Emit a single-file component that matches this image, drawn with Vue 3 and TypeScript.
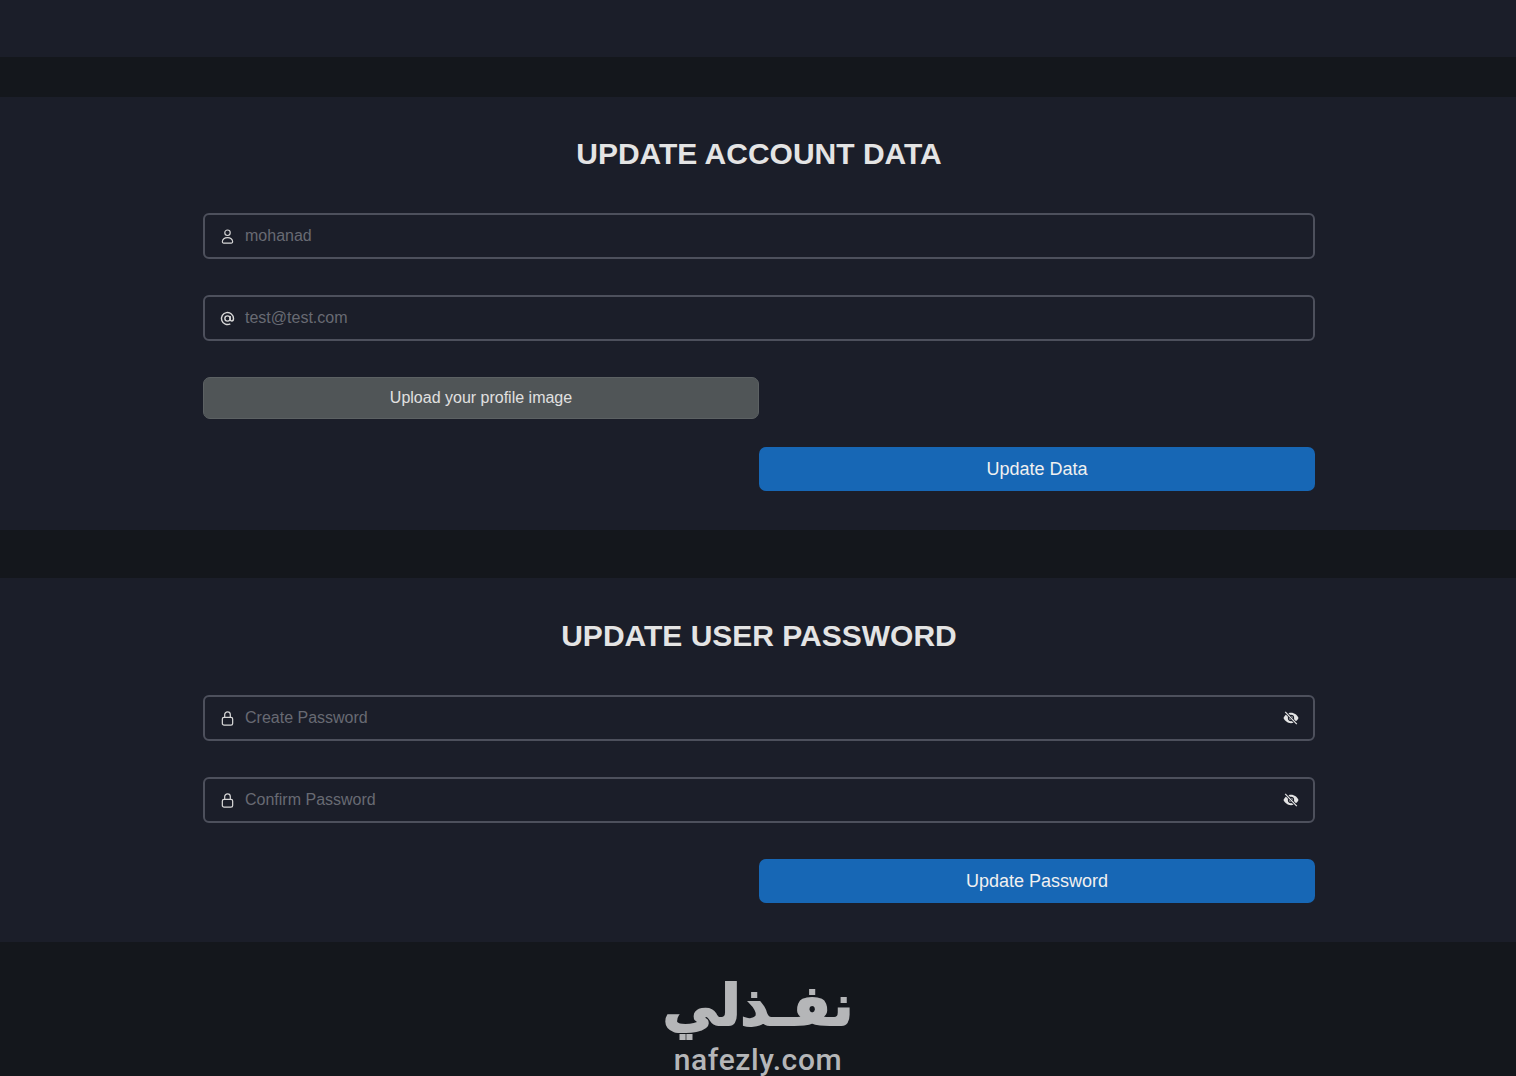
<script setup lang="ts">
const accountFields = [
  { icon: 'user', value: 'mohanad' },
  { icon: 'at', value: 'test@test.com' },
]
const passwordFields = ['Create Password', 'Confirm Password']
</script>

<template>
  <div class="page">
    <div class="topbar"></div>

    <section class="panel account">
      <h2>UPDATE ACCOUNT DATA</h2>
      <div class="form">
        <div v-for="f in accountFields" :key="f.value" class="field">
          <svg v-if="f.icon === 'user'" class="icon" viewBox="0 0 16 16" fill="none" stroke="currentColor" stroke-width="1.2">
            <circle cx="8" cy="4" r="2.900" />
            <path d="M4 15c-1 0-1.600-.6-1.500-1.500.3-2.600 2.600-4.300 5.500-4.300s5.200 1.700 5.500 4.300c.1.900-.5 1.500-1.500 1.500z" />
          </svg>
          <svg v-else class="icon" viewBox="0 0 16 16" fill="none" stroke="currentColor" stroke-width="1.500">
            <circle cx="8" cy="8" r="2.800" />
            <path d="M10.800 5.200v3.700c0 1.100.8 1.800 1.700 1.800s1.900-.8 1.900-2.700A6.400 6.400 0 1 0 11 13.700" />
          </svg>
          <span class="value">{{ f.value }}</span>
        </div>
        <div class="upload">Upload your profile image</div>
        <div class="btn-row after-upload">
          <button class="btn">Update Data</button>
        </div>
      </div>
    </section>

    <section class="panel password">
      <h2>UPDATE USER PASSWORD</h2>
      <div class="form">
        <div v-for="p in passwordFields" :key="p" class="field">
          <svg class="icon" viewBox="0 0 16 16" fill="none" stroke="currentColor" stroke-width="1.300">
            <rect x="2.500" y="6.800" width="11" height="8.200" rx="1.800" />
            <path d="M5 6.800V4a3 3 0 0 1 6 0v2.800" />
          </svg>
          <span class="value">{{ p }}</span>
          <svg class="eye" viewBox="0 0 16 16">
            <path fill="currentColor" d="M8 2.800c3.500 0 6.300 2.500 7.500 5.200-1.200 2.700-4 5.200-7.500 5.200S1.700 10.700.5 8C1.700 5.300 4.500 2.800 8 2.800z" />
            <circle cx="8" cy="8" r="2.600" fill="none" stroke="#1b1e29" stroke-width="1.100" />
            <path d="M2.200 1.800l11.600 12.400" stroke="#1b1e29" stroke-width="2.800" />
            <path d="M2.200 1.800l11.600 12.400" stroke="currentColor" stroke-width="1.200" />
          </svg>
        </div>
        <div class="btn-row">
          <button class="btn">Update Password</button>
        </div>
      </div>
    </section>

    <footer class="footer">
      <div class="logo-ar" dir="rtl" lang="ar">نفـذلي</div>
      <div class="logo-en">nafezly.com</div>
    </footer>
  </div>
</template>

<style>
html, body {
  margin: 0;
  background: #14171c;
}
</style>

<style scoped>
.page {
  height: 1076px;
  overflow: hidden;
  background: #14171c;
  font-family: "Liberation Sans", Arial, sans-serif;
}
.topbar {
  height: 57px;
  background: #1b1e29;
  margin-bottom: 40px;
}
.panel {
  background: #1b1e29;
  padding: 41px 201px 0 203px;
  box-sizing: border-box;
}
.account {
  height: 433px;
  margin-bottom: 48px;
}
.password {
  height: 364px;
  padding-top: 42px;
}
h2 {
  margin: 0 0 43px;
  height: 32px;
  line-height: 32px;
  text-align: center;
  font-size: 30px;
  font-weight: 700;
  color: #e4e4e4;
}
.form {
  display: flex;
  flex-direction: column;
  gap: 36px;
}
.field {
  height: 46px;
  box-sizing: border-box;
  border: 2px solid #4d505c;
  border-radius: 6px;
  display: flex;
  align-items: center;
  padding: 0 14px 0 15px;
  color: #d8d8d8;
}
.icon {
  width: 15px;
  height: 15px;
  flex: none;
  margin-right: 10px;
}
.value {
  flex: 1;
  font-size: 16px;
  color: #686a73;
}
.eye {
  width: 16px;
  height: 16px;
  flex: none;
  color: #e4e4e4;
}
.upload {
  width: 556px;
  height: 42px;
  box-sizing: border-box;
  border: 1px solid #5c6163;
  border-radius: 7px;
  background: #505557;
  color: #e0e0e0;
  font-size: 16px;
  line-height: 40px;
  text-align: center;
}
.btn-row {
  display: flex;
  justify-content: flex-end;
}
.after-upload {
  margin-top: -8px;
}
.btn {
  width: 556px;
  height: 44px;
  border: none;
  border-radius: 7px;
  background: #1767b5;
  color: #f0f0f0;
  font-family: inherit;
  font-size: 18px;
}
.footer {
  display: flex;
  flex-direction: column;
  align-items: center;
  color: #b5b6b8;
  padding-top: 30px;
}
.logo-ar {
  font-family: "DejaVu Sans", sans-serif;
  font-weight: 700;
  font-size: 56px;
  line-height: 68px;
  -webkit-text-stroke: 2px #b5b6b8;
}
.logo-en {
  margin-top: 4px;
  font-family: Roboto, sans-serif;
  font-weight: 500;
  font-size: 30px;
  line-height: 32px;
  letter-spacing: 0.6px;
}
</style>
